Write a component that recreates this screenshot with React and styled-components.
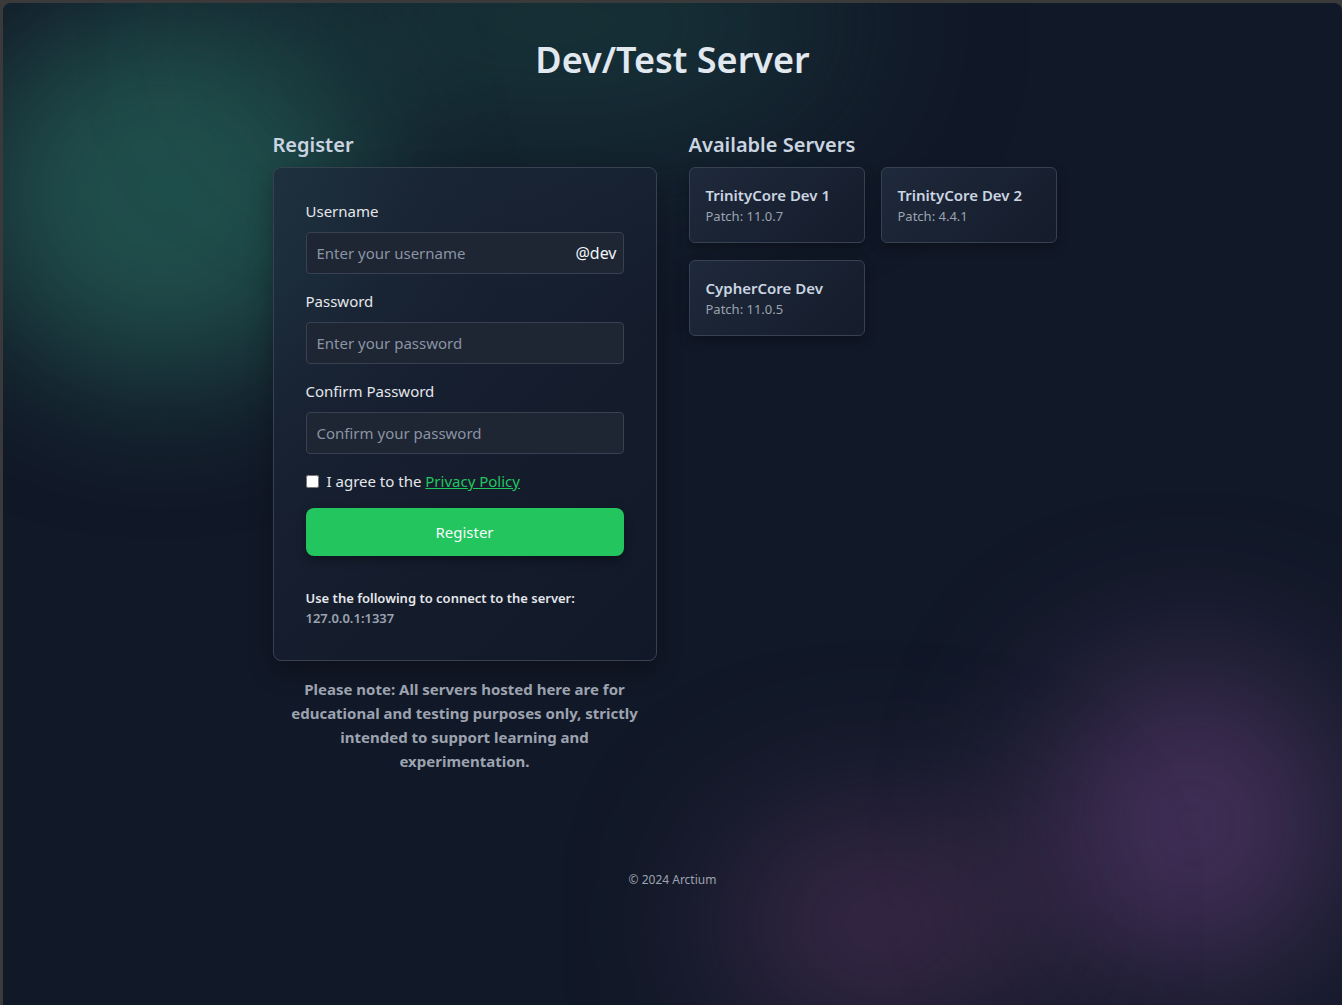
import React from "react";
import styled, { createGlobalStyle } from "styled-components";

const GlobalStyles = createGlobalStyle`
  html, body {
    margin: 0;
    padding: 0;
    background: #3a3a3a;
  }
  body {
    font-family: "Noto Sans", "Open Sans", sans-serif;
    color: #e5e7eb;
  }
  * { box-sizing: border-box; }
`;

const Frame = styled.div`
  padding: 3px 0 0 3px;
  min-height: 1005px;
`;

const Page = styled.div`
  position: relative;
  overflow: hidden;
  min-height: 1002px;
  border-radius: 8px 8px 0 0;
  background: #111827;
  display: flex;
  flex-direction: column;
  align-items: center;
`;

const Glow = styled.div`
  position: absolute;
  border-radius: 50%;
  filter: blur(${(p) => p.$blur}px);
  background: ${(p) => p.$color};
  left: ${(p) => p.$x}px;
  top: ${(p) => p.$y}px;
  width: ${(p) => p.$w}px;
  height: ${(p) => p.$h}px;
  pointer-events: none;
`;

const Content = styled.div`
  position: relative;
  width: 800px;
  display: flex;
  flex-direction: column;
  align-items: center;
`;

const Title = styled.h1`
  margin: 33px 0 0;
  font-size: 36px;
  line-height: 48px;
  font-weight: 600;
  color: #e2e8f0;
`;

const Columns = styled.div`
  width: 100%;
  margin-top: 47px;
  display: grid;
  grid-template-columns: 384px 384px;
  gap: 32px;
  align-items: start;
`;

const Column = styled.section`
  display: flex;
  flex-direction: column;
`;

const Heading = styled.h2`
  margin: 0 0 8px;
  font-size: 20px;
  line-height: 28px;
  font-weight: 600;
  color: #cbd5e1;
`;

const Card = styled.form`
  background: linear-gradient(135deg, rgba(30, 41, 59, 0.75), rgba(17, 24, 39, 0.75));
  border: 1px solid #374151;
  border-radius: 8px;
  padding: 32px;
  display: flex;
  flex-direction: column;
  box-shadow: 0 10px 25px rgba(0, 0, 0, 0.3);
`;

const Field = styled.div`
  display: flex;
  flex-direction: column;
  gap: 10px;
  margin-bottom: 16px;
`;

const Label = styled.label`
  font-size: 15px;
  line-height: 22px;
  color: #e5e7eb;
`;

const InputWrap = styled.div`
  display: flex;
  align-items: center;
  height: 42px;
  background: #1e2533;
  border: 1px solid #374151;
  border-radius: 4px;
  padding: 0 6px 0 8px;
`;

const Input = styled.input`
  flex: 1;
  min-width: 0;
  height: 100%;
  border: none;
  outline: none;
  background: transparent;
  color: #e5e7eb;
  font-family: inherit;
  font-size: 15px;
  &::placeholder { color: #8a94a3; }
`;

const Suffix = styled.span`
  font-size: 16px;
  color: #f1f5f9;
`;

const CheckRow = styled.label`
  display: flex;
  align-items: center;
  gap: 8px;
  font-size: 15px;
  color: #e5e7eb;
  margin-top: 1px;
  a {
    color: #22c55e;
    text-decoration: underline;
  }
`;

const Check = styled.input`
  width: 13px;
  height: 13px;
  margin: 0;
`;

const Button = styled.button`
  margin-top: 17px;
  height: 48px;
  border: none;
  border-radius: 8px;
  background: #22c55e;
  color: #f8fafc;
  font-family: inherit;
  font-size: 15px;
  box-shadow: 0 4px 10px rgba(0, 0, 0, 0.35);
`;

const Connect = styled.div`
  margin-top: 32px;
  display: flex;
  flex-direction: column;
  font-size: 13px;
  line-height: 20px;
  font-weight: 600;
  color: #e5e7eb;
  span { color: #9ca3af; }
`;

const Note = styled.p`
  margin: 16px 0 0;
  padding: 0 16px;
  text-align: center;
  font-size: 15px;
  line-height: 24px;
  font-weight: 700;
  color: #9ca3af;
`;

const ServerGrid = styled.div`
  display: flex;
  flex-wrap: wrap;
  gap: 17px 16px;
`;

const ServerCard = styled.div`
  width: 176px;
  height: 76px;
  padding: 16px;
  border: 1px solid #374151;
  border-radius: 6px;
  background: linear-gradient(135deg, #1e293b, #151c2b);
  box-shadow: 0 4px 12px rgba(0, 0, 0, 0.3);
  display: flex;
  flex-direction: column;
  justify-content: center;
`;

const ServerName = styled.div`
  font-size: 15px;
  line-height: 22px;
  font-weight: 600;
  color: #cbd5e1;
`;

const Patch = styled.div`
  font-size: 13px;
  line-height: 20px;
  color: #9ca3af;
`;

const Footer = styled.footer`
  position: relative;
  margin-top: 98px;
  font-size: 12px;
  color: #9ca3af;
`;

const servers = [
  { name: "TrinityCore Dev 1", patch: "11.0.7" },
  { name: "TrinityCore Dev 2", patch: "4.4.1" },
  { name: "CypherCore Dev", patch: "11.0.5" },
];

export default function App() {
  return (
    <>
      <GlobalStyles />
      <Frame>
        <Page>
          <Glow $color="rgba(42, 115, 100, 0.6)" $x={-40} $y={0} $w={400} $h={380} $blur={70} />
          <Glow $color="rgba(32, 95, 85, 0.4)" $x={250} $y={-100} $w={600} $h={240} $blur={90} />
          <Glow $color="rgba(120, 72, 140, 0.5)" $x={1040} $y={660} $w={300} $h={320} $blur={80} />
          <Glow $color="rgba(110, 62, 115, 0.45)" $x={720} $y={810} $w={320} $h={220} $blur={80} />
          <Content>
            <Title>Dev/Test Server</Title>
            <Columns>
              <Column>
                <Heading>Register</Heading>
                <Card onSubmit={(e) => e.preventDefault()}>
                  <Field>
                    <Label>Username</Label>
                    <InputWrap>
                      <Input placeholder="Enter your username" />
                      <Suffix>@dev</Suffix>
                    </InputWrap>
                  </Field>
                  <Field>
                    <Label>Password</Label>
                    <InputWrap>
                      <Input type="password" placeholder="Enter your password" />
                    </InputWrap>
                  </Field>
                  <Field>
                    <Label>Confirm Password</Label>
                    <InputWrap>
                      <Input type="password" placeholder="Confirm your password" />
                    </InputWrap>
                  </Field>
                  <CheckRow>
                    <Check type="checkbox" />
                    <span>
                      I agree to the <a href="#privacy">Privacy Policy</a>
                    </span>
                  </CheckRow>
                  <Button type="submit">Register</Button>
                  <Connect>
                    Use the following to connect to the server:
                    <span>127.0.0.1:1337</span>
                  </Connect>
                </Card>
                <Note>
                  Please note: All servers hosted here are for educational and
                  testing purposes only, strictly intended to support learning
                  and experimentation.
                </Note>
              </Column>
              <Column>
                <Heading>Available Servers</Heading>
                <ServerGrid>
                  {servers.map((s) => (
                    <ServerCard key={s.name}>
                      <ServerName>{s.name}</ServerName>
                      <Patch>Patch: {s.patch}</Patch>
                    </ServerCard>
                  ))}
                </ServerGrid>
              </Column>
            </Columns>
          </Content>
          <Footer>© 2024 Arctium</Footer>
        </Page>
      </Frame>
    </>
  );
}
